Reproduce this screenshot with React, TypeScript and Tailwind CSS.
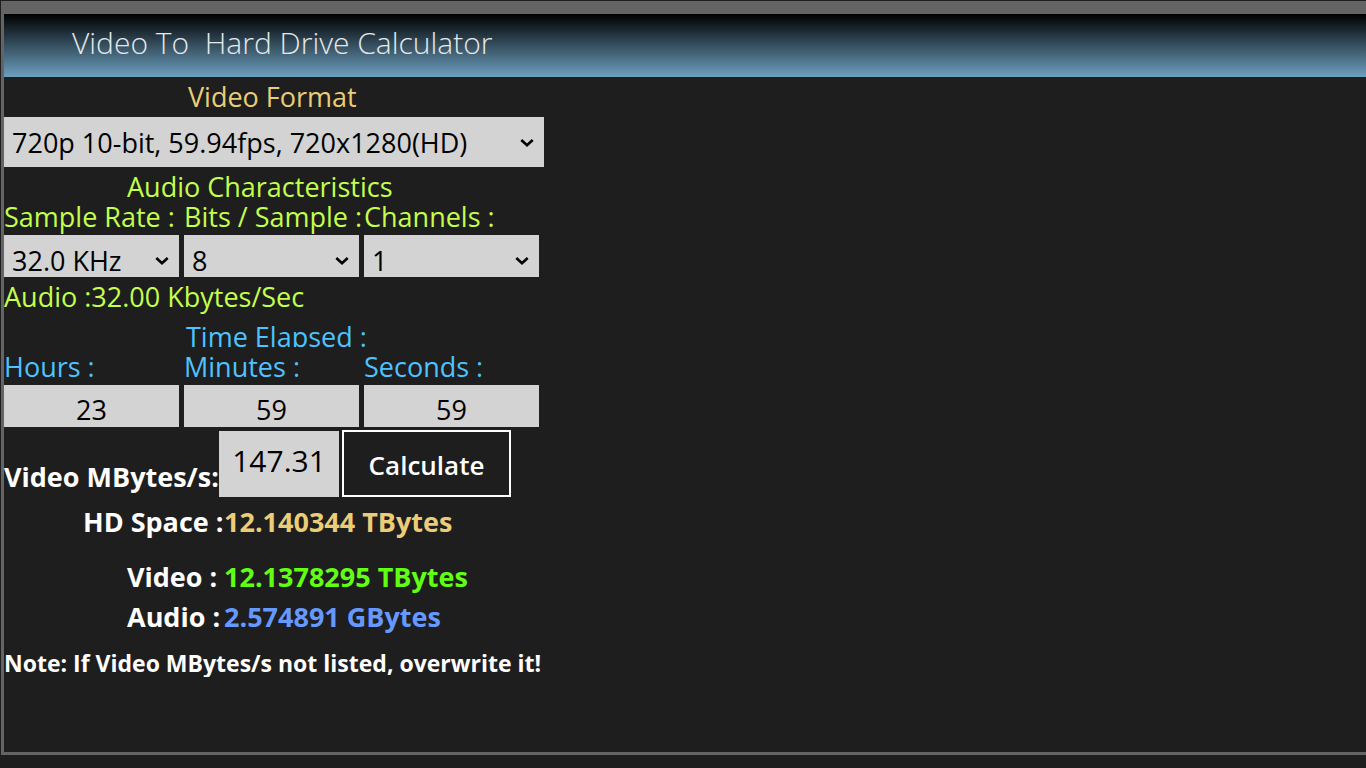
import { useState } from "react";

const sampleRates = ["32.0 KHz", "44.1 KHz", "48.0 KHz", "96.0 KHz"];
const bitDepths = ["8", "16", "24", "32"];
const channelCounts = ["1", "2", "4", "6", "8"];
const videoFormats = [
  "720p 10-bit, 59.94fps, 720x1280(HD)",
  "720p 8-bit, 59.94fps, 720x1280(HD)",
];

function Chevron() {
  return (
    <svg
      className="h-3 w-3.5"
      viewBox="0 0 14 12"
      fill="none"
      stroke="black"
      strokeWidth="2.6"
      aria-hidden="true"
    >
      <path d="M1.3 3L7 8.2L12.7 3" />
    </svg>
  );
}

type PickerProps = { id: string; label: string; options: string[] };

function Picker({ id, label, options }: PickerProps) {
  return (
    <div className="flex flex-col">
      <label htmlFor={id} className="h-[33px] whitespace-nowrap leading-[30px] text-[#c3ff4d]">
        {label}
      </label>
      <div className="relative">
        <select
          id={id}
          className="block h-[42px] w-full appearance-none bg-[#d3d3d3] pt-2.5 pl-2 leading-8 text-black outline-none"
        >
          {options.map((o) => (
            <option key={o}>{o}</option>
          ))}
        </select>
        <div className="pointer-events-none absolute inset-y-0 right-2.5 flex items-center pt-2.5">
          <Chevron />
        </div>
      </div>
    </div>
  );
}

type TimeFieldProps = { id: string; label: string; initial: string };

function TimeField({ id, label, initial }: TimeFieldProps) {
  const [value, setValue] = useState(initial);
  return (
    <div className="flex flex-col">
      <label htmlFor={id} className="h-[38px] leading-10 text-[#4dc3ff]">
        {label}
      </label>
      <input
        id={id}
        value={value}
        onChange={(e) => setValue(e.target.value)}
        className="h-[42px] w-full bg-[#d3d3d3] pt-1.5 text-center text-black outline-none"
      />
    </div>
  );
}

export default function App() {
  const [rate, setRate] = useState("147.31");
  return (
    <div className="flex min-h-screen flex-col bg-[#1e1e1e] pt-px pb-[13px] pl-px font-['Open_Sans','Noto_Sans',sans-serif] text-[27px] text-white">
      <div className="flex-1 border-t-[13px] border-b-[3px] border-l-[3px] border-[#646464]">
        <header className="flex h-[63px] items-center bg-linear-to-b/srgb from-black to-[#6c9fbf] pl-[68px] pb-1.5">
          <h1 className="whitespace-pre text-[30px] font-light text-[#e4e8ea]">
            Video To  Hard Drive Calculator
          </h1>
        </header>

        <main className="max-w-[540px]">
          <label htmlFor="format" className="block pl-[184px] leading-10 text-[#ebcd77]">
            Video Format
          </label>
          <div className="relative">
            <select
              id="format"
              className="block h-[50px] w-full appearance-none bg-[#d3d3d3] pt-0.5 pl-2 text-black outline-none"
            >
              {videoFormats.map((f) => (
                <option key={f}>{f}</option>
              ))}
            </select>
            <div className="pointer-events-none absolute inset-y-0 right-2.5 flex items-center pt-0.5">
              <Chevron />
            </div>
          </div>

          <section>
            <h2 className="pt-[5px] pl-[123px] leading-[30px] text-[#c3ff4d]">Audio Characteristics</h2>
            <div className="grid grid-cols-3 gap-[5px] pr-[5px]">
              <Picker id="rate" label="Sample Rate :" options={sampleRates} />
              <Picker id="bits" label="Bits / Sample :" options={bitDepths} />
              <Picker id="channels" label="Channels :" options={channelCounts} />
            </div>
            <p className="leading-10 text-[#c3ff4d]">Audio :32.00 Kbytes/Sec</p>
          </section>

          <section>
            <h2 className="h-[30px] overflow-hidden pl-[182px] leading-10 text-[#4dc3ff]">Time Elapsed :</h2>
            <div className="grid grid-cols-3 gap-[5px] pr-[5px]">
              <TimeField id="hours" label="Hours :" initial="23" />
              <TimeField id="minutes" label="Minutes :" initial="59" />
              <TimeField id="seconds" label="Seconds :" initial="59" />
            </div>
          </section>

          <div className="flex items-end pt-[3px] font-bold">
            <label htmlFor="mbytes" className="w-[215px] whitespace-nowrap leading-10">
              Video MBytes/s:
            </label>
            <input
              id="mbytes"
              value={rate}
              onChange={(e) => setRate(e.target.value)}
              className="h-[66px] w-[120px] bg-[#d3d3d3] pb-2 text-center text-[30px] font-normal text-black outline-none"
            />
            <button
              type="button"
              className="ml-[3px] h-[67px] w-[169px] border-2 border-white pt-1 text-[26px] font-semibold"
            >
              Calculate
            </button>
          </div>

          <dl className="grid grid-cols-[220px_1fr] font-bold leading-10">
            <dt className="pt-[5px] pl-[79px]">HD Space :</dt>
            <dd className="pt-[5px] text-[#ebcd77]">12.140344 TBytes</dd>
            <dt className="pt-[15px] pl-[123px]">Video :</dt>
            <dd className="pt-[15px] text-[#61ff14]">12.1378295 TBytes</dd>
            <dt className="pl-[123px]">Audio :</dt>
            <dd className="text-[#6699ff]">2.574891 GBytes</dd>
          </dl>

          <p className="h-10 overflow-hidden whitespace-nowrap pt-1.5 text-[23px] font-bold leading-10">
            Note: If Video MBytes/s not listed, overwrite it!
          </p>
        </main>
      </div>
    </div>
  );
}
